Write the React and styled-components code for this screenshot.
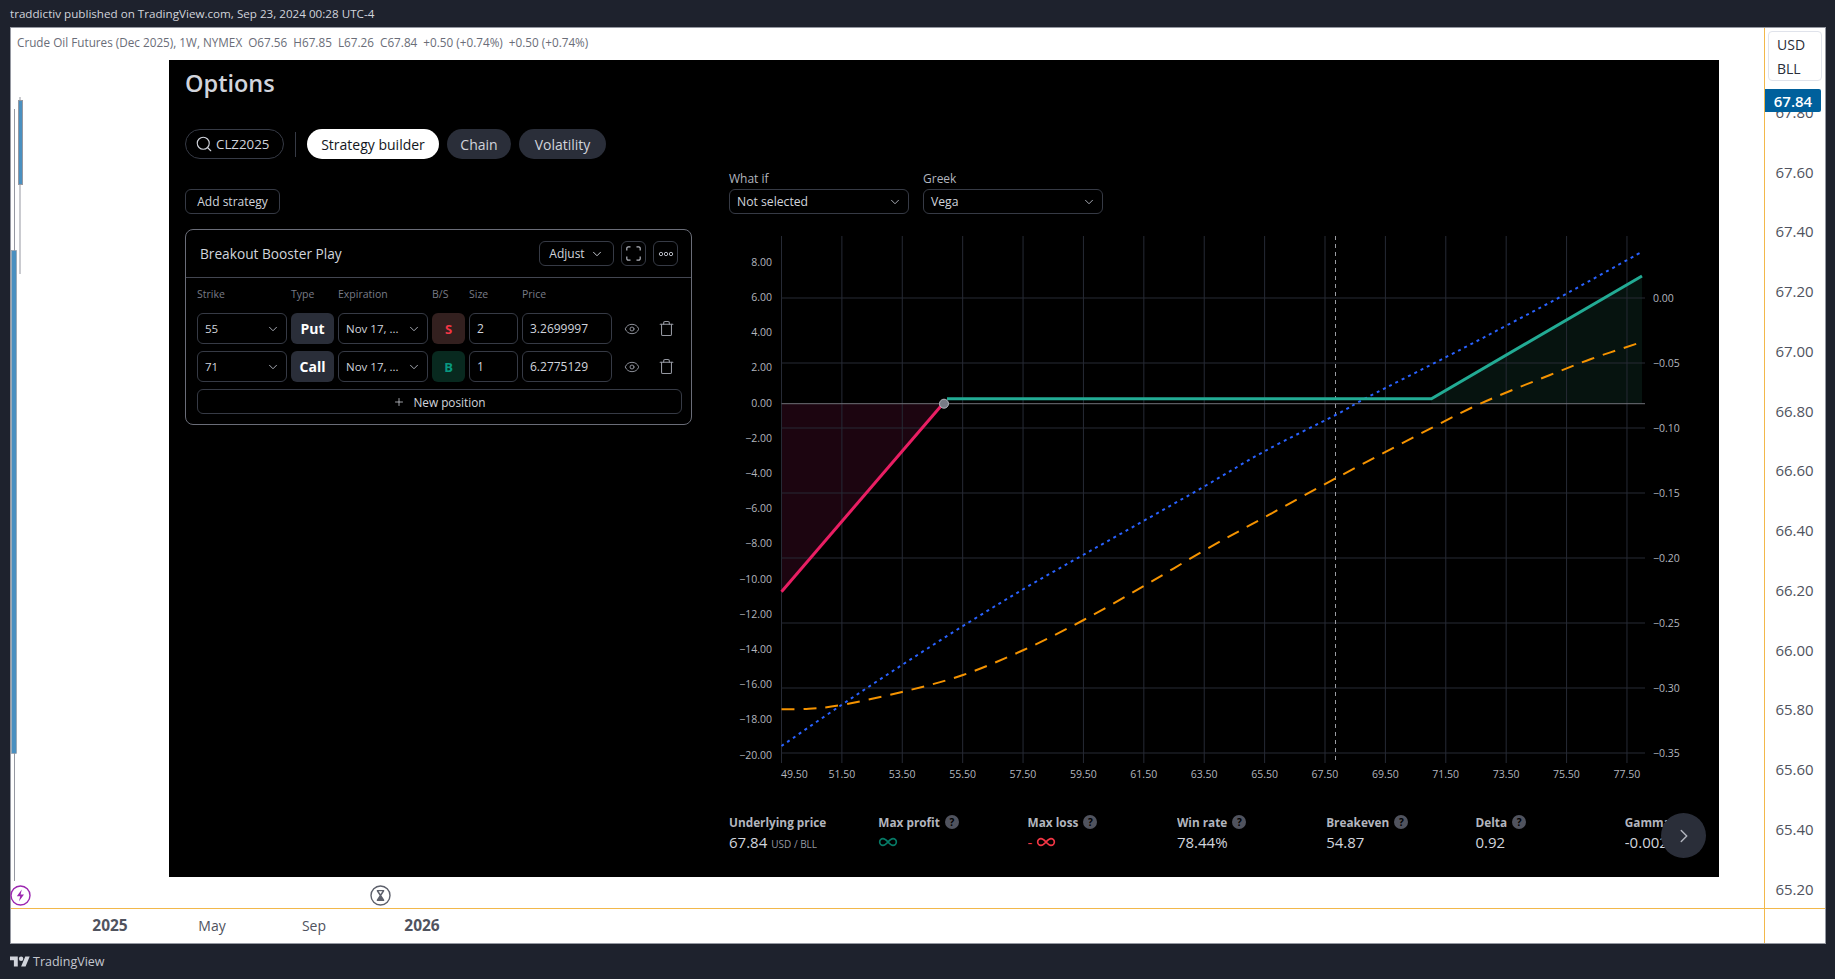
import React from 'react';
import styled, { createGlobalStyle } from 'styled-components';
import { Search, ChevronDown, ChevronRight, Plus, Eye, Trash, Infinity as InfinityIcon } from 'lucide-react';

const GlobalStyle = createGlobalStyle`
  html, body {
    margin: 0;
    padding: 0;
    background: #1e222d;
  }
  * {
    box-sizing: border-box;
  }
  body {
    font-family: "Open Sans", "Noto Sans", sans-serif;
  }
`;

const priceTicks = ['67.80', '67.60', '67.40', '67.20', '67.00', '66.80', '66.60', '66.40', '66.20', '66.00', '65.80', '65.60', '65.40', '65.20'];

const positions = [
  { strike: '55', type: 'Put', side: 'S', size: '2', price: '3.2699997' },
  { strike: '71', type: 'Call', side: 'B', size: '1', price: '6.2775129' },
];

const stats = [
  { label: 'Max profit', kind: 'profit' },
  { label: 'Max loss', kind: 'loss' },
  { label: 'Win rate', value: '78.44%' },
  { label: 'Breakeven', value: '54.87' },
  { label: 'Delta', value: '0.92' },
  { label: 'Gamma', value: '-0.002' },
];

// chart coordinates are page pixels, the svg viewBox starts at the chart's corner
const gridX = Array.from({ length: 15 }, (_, i) => 781.5 + i * 60.39);
const gridY = [298, 363, 428, 493, 558, 623, 688, 753];
const leftTicks = ['8.00', '6.00', '4.00', '2.00', '0.00', '−2.00', '−4.00', '−6.00', '−8.00', '−10.00', '−12.00', '−14.00', '−16.00', '−18.00', '−20.00'];
const rightTicks = ['0.00', '−0.05', '−0.10', '−0.15', '−0.20', '−0.25', '−0.30', '−0.35'];
const xTicks = ['51.50', '53.50', '55.50', '57.50', '59.50', '61.50', '63.50', '65.50', '67.50', '69.50', '71.50', '73.50', '75.50', '77.50'];

const bluePoints = [[781.5, 746], [841.4, 705], [902, 665], [963, 626], [1023.6, 589], [1083, 555], [1144, 520.7], [1205, 486], [1265, 451], [1335.5, 415], [1368, 397], [1446.8, 356.7], [1507.5, 325], [1567.6, 293], [1642, 251.7]];
const orangePoints = [[781.5, 709.3], [809, 708.7], [841.4, 705], [902, 692], [963, 675], [1023.6, 650], [1083.6, 620], [1144, 586], [1205, 550], [1265.6, 516.7], [1340, 476], [1416, 436], [1471, 408], [1510, 391], [1550, 375], [1591, 359], [1639, 343]];

// catmull-rom through the read points so the curves don't kink
const smooth = (pts) => {
  let d = `M${pts[0][0]} ${pts[0][1]}`;
  for (let i = 0; i < pts.length - 1; i++) {
    const a = pts[Math.max(i - 1, 0)];
    const b = pts[i];
    const c = pts[i + 1];
    const e = pts[Math.min(i + 2, pts.length - 1)];
    d += ` C${b[0] + (c[0] - a[0]) / 6} ${b[1] + (c[1] - a[1]) / 6} ${c[0] - (e[0] - b[0]) / 6} ${c[1] - (e[1] - b[1]) / 6} ${c[0]} ${c[1]}`;
  }
  return d;
};

const OptionsChart = () => (
  <ChartSvg viewBox="729 232 960 550" width="960" height="550">
    <polygon points="781.5,403.7 945,403.7 781.5,592" fill="#1c0510" />
    <polygon points="1431.4,403.7 1431.4,399 1642,276 1642,403.7" fill="#06130f" />
    {gridX.map((x) => (
      <line key={x} x1={x} x2={x} y1="236" y2="763" stroke="#262a35" strokeWidth="1" />
    ))}
    {gridY.map((y) => (
      <line key={y} x1="781.5" x2="1645" y1={y} y2={y} stroke="#262a35" strokeWidth="1" />
    ))}
    <line x1="781.5" x2="1645" y1="403.7" y2="403.7" stroke="#6f7178" strokeWidth="1" />
    <line x1="1335.5" x2="1335.5" y1="236" y2="763" stroke="#9a9ca3" strokeWidth="1" strokeDasharray="4 4" />
    <path d={smooth(bluePoints)} fill="none" stroke="#2962ff" strokeWidth="2" strokeDasharray="3 4" />
    <path d={smooth(orangePoints)} fill="none" stroke="#f59300" strokeWidth="2" strokeDasharray="13 9" />
    <line x1="781.5" y1="591.7" x2="941" y2="406" stroke="#e91e63" strokeWidth="3" />
    <polyline points="947,398.7 1431.4,398.7 1642,276" fill="none" stroke="#22ab94" strokeWidth="3" />
    <circle cx="944" cy="403.7" r="4.5" fill="#787b86" stroke="#b2b5be" strokeWidth="1" />
    {leftTicks.map((t, i) => (
      <AxisText key={t} x="772" y={263 + i * 35.2} textAnchor="end" dominantBaseline="middle">{t}</AxisText>
    ))}
    {rightTicks.map((t, i) => (
      <AxisText key={t} x="1653" y={299 + i * 65} dominantBaseline="middle">{t}</AxisText>
    ))}
    <AxisText x="781" y="775.5" dominantBaseline="middle">49.50</AxisText>
    {xTicks.map((t, i) => (
      <AxisText key={t} x={841.8 + i * 60.39} y="775.5" textAnchor="middle" dominantBaseline="middle">{t}</AxisText>
    ))}
  </ChartSvg>
);

const Select = ({ value, wide }) => (
  <SelectBox $wide={wide}>
    <span>{value}</span>
    <ChevronDown size={14} strokeWidth={1.6} color="#b2b5be" />
  </SelectBox>
);

const FullscreenIcon = () => (
  <svg width="15" height="15" viewBox="0 0 15 15" fill="none" stroke="#b2b5be" strokeWidth="1.2">
    <path d="M.8 4.5V2.3A1.5 1.5 0 0 1 2.3.8h2.2M10.5.8h2.2a1.5 1.5 0 0 1 1.5 1.5v2.2M14.2 10.5v2.2a1.5 1.5 0 0 1-1.5 1.5h-2.2M4.5 14.2H2.3a1.5 1.5 0 0 1-1.5-1.5v-2.2" />
  </svg>
);

const DotsIcon = () => (
  <svg width="16" height="6" viewBox="0 0 16 6" fill="none" stroke="#b2b5be" strokeWidth="1">
    <circle cx="3" cy="3" r="1.7" />
    <circle cx="8" cy="3" r="1.7" />
    <circle cx="13" cy="3" r="1.7" />
  </svg>
);

const LogoIcon = () => (
  <svg width="20" height="16" viewBox="0 0 36 28" fill="#d1d4dc">
    <path d="M14 22H7V11H0V4h14v18zM28 22h-8l7.5-18h8L28 22z" />
    <circle cx="20" cy="8" r="4" />
  </svg>
);

const BoltIcon = () => (
  <svg width="21" height="21" viewBox="0 0 21 21" fill="none">
    <circle cx="10.5" cy="10.5" r="9.5" stroke="#9c27b0" strokeWidth="1.4" />
    <path d="M11.8 4.5 6.8 11.2h3.4l-1.2 5 5-6.6h-3.4z" fill="#9c27b0" />
  </svg>
);

const HourglassIcon = () => (
  <svg width="21" height="21" viewBox="0 0 21 21" fill="none">
    <circle cx="10.5" cy="10.5" r="9.5" stroke="#5d606b" strokeWidth="1.4" />
    <path d="M6.8 5h7.4v1.2l-2.8 4.3 2.8 4.3V16H6.8v-1.2l2.8-4.3-2.8-4.3z" fill="#5d606b" />
    <path d="M8.6 6.2h3.8l-1.9 2.9z" fill="#fff" />
  </svg>
);

const Candles = () => (
  <CandleSvg width="30" height="880" viewBox="0 0 30 880">
    <line x1="3.5" x2="3.5" y1="81" y2="853" stroke="#9598a1" strokeWidth="1" />
    <line x1="9" x2="9" y1="69" y2="246" stroke="#9598a1" strokeWidth="1" />
    <rect x="7.5" y="72.5" width="4" height="84" fill="#4a90c0" stroke="#9598a1" strokeWidth="1" />
    <rect x="0.5" y="222.5" width="5" height="503" fill="#4a90c0" stroke="#9598a1" strokeWidth="0.6" />
  </CandleSvg>
);

const App = () => (
  <>
    <GlobalStyle />
    <Page>
      <TopBar>traddictiv published on TradingView.com, Sep 23, 2024 00:28 UTC-4</TopBar>
      <Frame>
        <ChartPane>
          <Legend>Crude Oil Futures (Dec 2025), 1W, NYMEX&nbsp; O67.56&nbsp; H67.85&nbsp; L67.26&nbsp; C67.84&nbsp; +0.50 (+0.74%)&nbsp; +0.50 (+0.74%)</Legend>
          <Candles />
          <Marker $left={-1}><BoltIcon /></Marker>
          <Marker $left={359}><HourglassIcon /></Marker>

          <Panel>
            <Title>Options</Title>
            <TabRow>
              <SearchPill>
                <Search size={18} strokeWidth={1.5} color="#d1d4dc" />
                CLZ2025
              </SearchPill>
              <TabDivider />
              <Tab $active $width={132}>Strategy builder</Tab>
              <Tab $width={64}>Chain</Tab>
              <Tab $width={87}>Volatility</Tab>
            </TabRow>

            <Body>
              <LeftColumn>
                <AddButton>Add strategy</AddButton>
                <Card>
                  <CardHeader>
                    <CardTitle>Breakout Booster Play</CardTitle>
                    <AdjustButton>
                      Adjust
                      <ChevronDown size={14} strokeWidth={1.6} />
                    </AdjustButton>
                    <IconButton><FullscreenIcon /></IconButton>
                    <IconButton><DotsIcon /></IconButton>
                  </CardHeader>
                  <CardBody>
                    <LegGrid>
                      <ColumnLabel>Strike</ColumnLabel>
                      <ColumnLabel>Type</ColumnLabel>
                      <ColumnLabel>Expiration</ColumnLabel>
                      <ColumnLabel>B/S</ColumnLabel>
                      <ColumnLabel>Size</ColumnLabel>
                      <ColumnLabel>Price</ColumnLabel>
                    </LegGrid>
                    <Rows>
                      {positions.map((p) => (
                        <LegGrid key={p.strike}>
                          <Select value={p.strike} />
                          <TypeBadge>{p.type}</TypeBadge>
                          <Select value="Nov 17, ..." />
                          <SideBadge $side={p.side}>{p.side}</SideBadge>
                          <Field>{p.size}</Field>
                          <Field>{p.price}</Field>
                          <RowIcon><Eye size={16} strokeWidth={1.4} /></RowIcon>
                          <RowIcon><Trash size={17} strokeWidth={1.5} /></RowIcon>
                        </LegGrid>
                      ))}
                      <NewPosition>
                        <Plus size={12} strokeWidth={1.5} />
                        New position
                      </NewPosition>
                    </Rows>
                  </CardBody>
                </Card>
              </LeftColumn>

              <RightColumn>
                <Filters>
                  <Filter>
                    <FilterLabel>What if</FilterLabel>
                    <Select value="Not selected" wide />
                  </Filter>
                  <Filter>
                    <FilterLabel>Greek</FilterLabel>
                    <Select value="Vega" wide />
                  </Filter>
                </Filters>
                <OptionsChart />
              </RightColumn>
            </Body>

            <StatsRow>
              <Stat>
                <StatLabel>Underlying price</StatLabel>
                <StatValue>67.84 <Unit>USD / BLL</Unit></StatValue>
              </Stat>
              {stats.map((s) => (
                <Stat key={s.label}>
                  <StatLabel>
                    {s.label}
                    <Tip>?</Tip>
                  </StatLabel>
                  {s.kind === 'profit' && (
                    <StatValue $color="#067a66"><InfinityIcon size={20} strokeWidth={2} /></StatValue>
                  )}
                  {s.kind === 'loss' && (
                    <StatValue $color="#f23645">- <InfinityIcon size={20} strokeWidth={2} /></StatValue>
                  )}
                  {!s.kind && <StatValue>{s.value}</StatValue>}
                </Stat>
              ))}
            </StatsRow>
            <NextButton><ChevronRight size={22} strokeWidth={1.6} /></NextButton>
          </Panel>
        </ChartPane>

        <PriceAxis>
          <CurrencyBox>
            <span>USD</span>
            <span>BLL</span>
          </CurrencyBox>
          <LastPrice>67.84</LastPrice>
          {priceTicks.map((t) => (
            <PriceTick key={t}>{t}</PriceTick>
          ))}
        </PriceAxis>

        <TimeAxis>
          <TimeLabel $bold>2025</TimeLabel>
          <TimeLabel>May</TimeLabel>
          <TimeLabel>Sep</TimeLabel>
          <TimeLabel $bold>2026</TimeLabel>
        </TimeAxis>
        <AxisCorner />
      </Frame>
      <Footer>
        <LogoIcon />
        TradingView
      </Footer>
    </Page>
  </>
);

export default App;

const Page = styled.div`
  width: 1835px;
  height: 979px;
  display: flex;
  flex-direction: column;
  background: #1e222d;
  overflow: hidden;
`;

const TopBar = styled.div`
  height: 27px;
  padding-left: 10px;
  display: flex;
  align-items: center;
  font-size: 11.65px;
  color: #d1d4dc;
`;

const Frame = styled.div`
  width: 1816px;
  height: 917px;
  margin-left: 10px;
  display: grid;
  grid-template-columns: 1753px 61px;
  grid-template-rows: 880px 35px;
  background: #fff;
  border: 1px solid #9598a1;
`;

const ChartPane = styled.div`
  position: relative;
`;

const Legend = styled.div`
  padding: 7px 0 0 6px;
  font-size: 11.72px;
  line-height: 14px;
  color: #6a6d78;
`;

const CandleSvg = styled.svg`
  position: absolute;
  left: 0;
  top: 0;
`;

const Marker = styled.div`
  position: absolute;
  left: ${(p) => p.$left}px;
  top: 857px;
  display: flex;
`;

const Panel = styled.div`
  position: absolute;
  left: 158px;
  top: 32px;
  width: 1550px;
  height: 817px;
  padding: 9px 0 0 16px;
  background: #000;
  color: #d1d4dc;
  overflow: hidden;
`;

const Title = styled.div`
  font-size: 23.5px;
  font-weight: 600;
  line-height: 28px;
  color: #d1d4dc;
`;

const TabRow = styled.div`
  margin-top: 32px;
  height: 30px;
  display: flex;
  align-items: center;
`;

const SearchPill = styled.div`
  width: 99px;
  height: 30px;
  padding-left: 9px;
  display: flex;
  align-items: center;
  gap: 3px;
  font-size: 13.3px;
  border: 1px solid #363a45;
  border-radius: 15px;
`;

const TabDivider = styled.div`
  width: 1px;
  height: 25px;
  margin: 0 11px;
  background: #363a45;
`;

const Tab = styled.div`
  width: ${(p) => p.$width}px;
  height: 30px;
  margin-right: 8px;
  display: flex;
  align-items: center;
  justify-content: center;
  font-size: 14px;
  border-radius: 15px;
  color: ${(p) => (p.$active ? '#131722' : '#d1d4dc')};
  background: ${(p) => (p.$active ? '#fff' : '#2a2e39')};
`;

const Body = styled.div`
  margin-top: 11px;
  display: flex;
`;

const LeftColumn = styled.div`
  width: 507px;
  padding-top: 19px;
  flex-shrink: 0;
`;

const AddButton = styled.div`
  width: 95px;
  height: 25px;
  display: flex;
  align-items: center;
  justify-content: center;
  font-size: 12px;
  border: 1px solid #363a45;
  border-radius: 6px;
`;

const Card = styled.div`
  margin-top: 15px;
  height: 196px;
  border: 1px solid #6a6d78;
  border-radius: 8px;
`;

const CardHeader = styled.div`
  height: 48px;
  padding: 0 13px 0 14px;
  display: flex;
  align-items: center;
  gap: 7px;
  border-bottom: 1px solid #434651;
`;

const CardTitle = styled.div`
  flex: 1;
  font-size: 13.7px;
`;

const AdjustButton = styled.div`
  width: 75px;
  height: 25px;
  display: flex;
  align-items: center;
  justify-content: center;
  gap: 5px;
  font-size: 12px;
  border: 1px solid #363a45;
  border-radius: 6px;
`;

const IconButton = styled.div`
  width: 25px;
  height: 25px;
  display: flex;
  align-items: center;
  justify-content: center;
  border: 1px solid #363a45;
  border-radius: 6px;
`;

const CardBody = styled.div`
  padding: 9px 0 0 11px;
`;

const LegGrid = styled.div`
  display: grid;
  grid-template-columns: 90px 43px 90px 33px 49px 90px 32px 28px;
  column-gap: 4px;
`;

const ColumnLabel = styled.div`
  font-size: 10.5px;
  line-height: 14px;
  color: #787b86;
`;

const Rows = styled.div`
  margin-top: 12px;
  display: flex;
  flex-direction: column;
  gap: 7px;
`;

const SelectBox = styled.div`
  height: ${(p) => (p.$wide ? 25 : 31)}px;
  padding: 0 6px 0 7px;
  display: flex;
  align-items: center;
  justify-content: space-between;
  font-size: ${(p) => (p.$wide ? 12.2 : 11.5)}px;
  border: 1px solid #363a45;
  border-radius: 6px;
  white-space: nowrap;
`;

const TypeBadge = styled.div`
  height: 31px;
  display: flex;
  align-items: center;
  justify-content: center;
  font-size: 14px;
  font-weight: 700;
  color: #fff;
  background: #2a2e39;
  border-radius: 6px;
`;

const SideBadge = styled.div`
  height: 31px;
  display: flex;
  align-items: center;
  justify-content: center;
  font-size: 13px;
  font-weight: 700;
  color: ${(p) => (p.$side === 'S' ? '#f23645' : '#089981')};
  background: ${(p) => (p.$side === 'S' ? '#33201f' : '#08291f')};
  border-radius: 6px;
`;

const Field = styled.div`
  height: 31px;
  padding-left: 7px;
  display: flex;
  align-items: center;
  font-size: 12px;
  border: 1px solid #363a45;
  border-radius: 6px;
`;

const RowIcon = styled.div`
  height: 31px;
  display: flex;
  align-items: center;
  justify-content: center;
  color: #9598a1;
`;

const NewPosition = styled.div`
  width: 485px;
  height: 25px;
  display: flex;
  align-items: center;
  justify-content: center;
  gap: 8px;
  font-size: 11.8px;
  border: 1px solid #363a45;
  border-radius: 6px;
`;

const RightColumn = styled.div`
  margin-left: 37px;
  flex: 1;
`;

const Filters = styled.div`
  display: flex;
  gap: 14px;
`;

const Filter = styled.div`
  width: 180px;
`;

const FilterLabel = styled.div`
  padding-top: 2px;
  margin-bottom: 3px;
  font-size: 12px;
  line-height: 14px;
  color: #b2b5be;
`;

const ChartSvg = styled.svg`
  display: block;
  margin-top: 18px;
`;

const AxisText = styled.text`
  font-size: 10.5px;
  fill: #b2b5be;
`;

const StatsRow = styled.div`
  margin-top: 32px;
  margin-left: 544px;
  display: grid;
  grid-template-columns: repeat(7, 149.3px);
`;

const Stat = styled.div`
  white-space: nowrap;
  overflow: hidden;
`;

const StatLabel = styled.div`
  height: 16px;
  display: flex;
  align-items: center;
  gap: 5px;
  font-size: 11.8px;
  font-weight: 700;
  color: #b2b5be;
`;

const Tip = styled.span`
  width: 14px;
  height: 14px;
  display: flex;
  align-items: center;
  justify-content: center;
  border-radius: 50%;
  font-size: 10px;
  color: #000;
  background: #50535e;
`;

const StatValue = styled.div`
  height: 22px;
  margin-top: 1px;
  display: flex;
  align-items: center;
  gap: 4px;
  font-size: 15px;
  font-weight: 500;
  color: ${(p) => p.$color || '#d1d4dc'};
`;

const Unit = styled.span`
  margin-top: 3px;
  font-size: 10px;
  font-weight: 400;
  color: #9598a1;
`;

const NextButton = styled.div`
  position: absolute;
  left: 1492px;
  top: 753px;
  width: 45px;
  height: 45px;
  display: flex;
  align-items: center;
  justify-content: center;
  border-radius: 50%;
  color: #b2b5be;
  background: #2a2e39;
`;

const PriceAxis = styled.div`
  position: relative;
  padding-top: 54px;
  display: flex;
  flex-direction: column;
  border-left: 1px solid #f2b84b;
  overflow: hidden;
`;

const CurrencyBox = styled.div`
  position: absolute;
  left: 3px;
  top: 3px;
  width: 54px;
  height: 50px;
  padding-left: 8px;
  display: flex;
  flex-direction: column;
  justify-content: space-around;
  font-size: 14px;
  color: #2a2e39;
  background: #fff;
  border: 1px solid #e0e3eb;
  border-radius: 4px;
`;

const LastPrice = styled.div`
  position: absolute;
  left: 0;
  top: 61px;
  width: 56px;
  height: 23px;
  display: flex;
  align-items: center;
  justify-content: center;
  font-size: 15px;
  font-weight: 600;
  color: #fff;
  background: #00609c;
  border-radius: 0 2px 2px 0;
  z-index: 1;
`;

const PriceTick = styled.div`
  height: 59.75px;
  flex-shrink: 0;
  display: flex;
  align-items: center;
  justify-content: center;
  padding-right: 1px;
  font-size: 15px;
  color: #50535e;
`;

const TimeAxis = styled.div`
  padding: 0 0 2px 48px;
  display: grid;
  grid-template-columns: 102px 102px 102px 114px;
  align-items: center;
  border-top: 1px solid #f2b84b;
`;

const TimeLabel = styled.div`
  text-align: center;
  font-size: ${(p) => (p.$bold ? 15.5 : 14)}px;
  font-weight: ${(p) => (p.$bold ? 700 : 400)};
  color: #50535e;
`;

const AxisCorner = styled.div`
  border-top: 1px solid #f2b84b;
  border-left: 1px solid #f2b84b;
`;

const Footer = styled.div`
  flex: 1;
  padding-left: 10px;
  display: flex;
  align-items: center;
  gap: 3px;
  font-size: 12.5px;
  color: #c4c7cf;
`;
